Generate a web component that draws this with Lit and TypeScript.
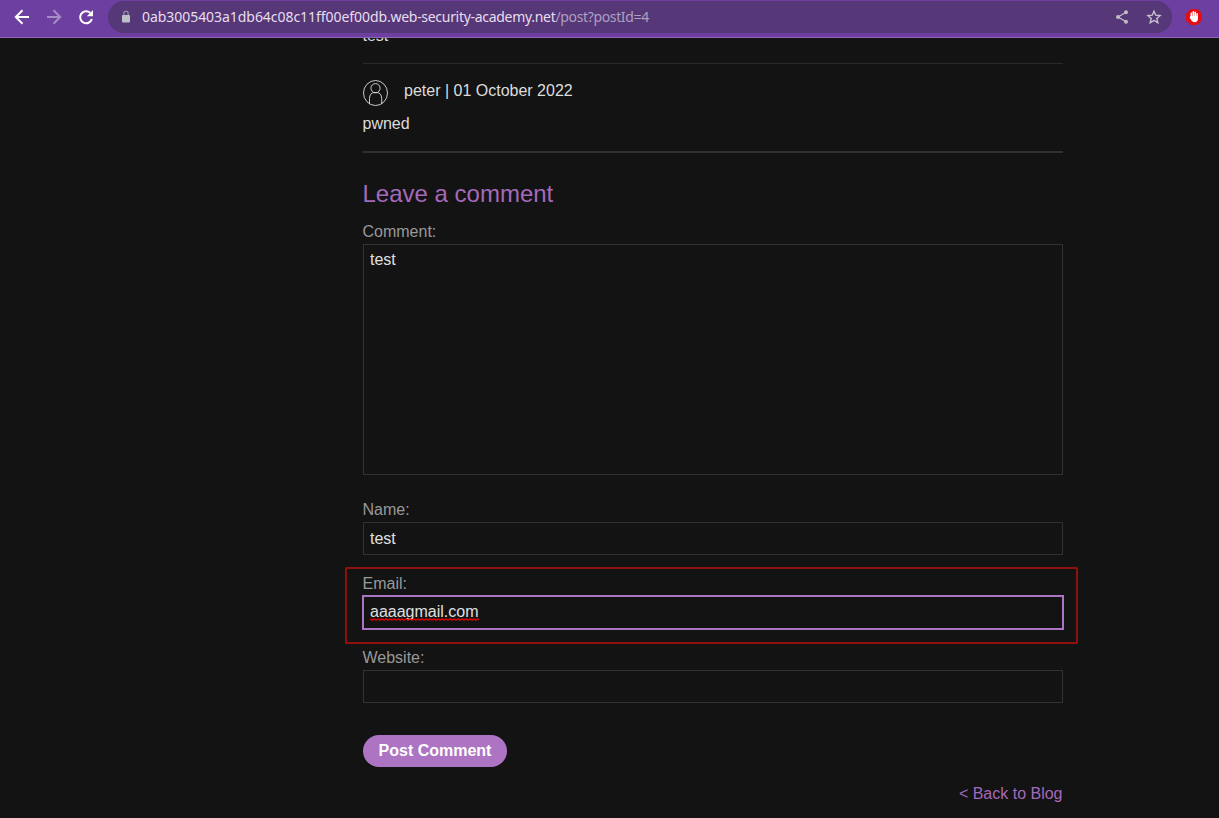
import { LitElement, html, css, svg } from "lit";
import { customElement, property } from "lit/decorators.js";

@customElement("browser-bar")
class BrowserBar extends LitElement {
  static styles = css`
    :host { display: block; position: relative; z-index: 2; }
    .bar { box-sizing: border-box; height: 38px; display: flex; align-items: flex-start; background: #6d3fa0; border-bottom: 1px solid #9065ba; }
    .nav { display: flex; gap: 16px; padding: 9px 0 0 14px; width: 94px; flex: none; }
    svg { display: block; flex: none; }
    .address { box-sizing: border-box; display: flex; align-items: center; width: 1064px; height: 32px; margin-top: 1px; border-radius: 16px; background: #563778; padding: 0 10px 0 10px; flex: none; }
    .url { flex: 1; margin-left: 8px; font: 14px/20px "Noto Sans", sans-serif; color: #e6deee; white-space: nowrap; }
    .url span { display: inline-block; }
    .sub { letter-spacing: -0.05px; }
    .domain { letter-spacing: -0.3px; }
    .path { color: #af9fc0; letter-spacing: -0.35px; }
    .tools { display: flex; gap: 16px; }
    .ext { margin: 8px 0 0 13px; }
  `;
  render() {
    return html`<div class="bar">
      <div class="nav">
        <svg width="16" height="16" viewBox="0 0 16 16" fill="none" stroke="#fff" stroke-width="2"><path d="M15 8H2M8.5 1.3L1.8 8l6.7 6.7" /></svg>
        <svg width="16" height="16" viewBox="0 0 16 16" fill="none" stroke="#a78bc6" stroke-width="2"><path d="M1 8h13M7.5 1.3L14.2 8l-6.7 6.7" /></svg>
        <svg width="16" height="16" viewBox="0 0 16 16"><path d="M13.9 10A6 6 0 1 1 12.2 3.8" fill="none" stroke="#fff" stroke-width="2" /><path d="M15 1v6.2H8.8z" fill="#fff" /></svg>
      </div>
      <div class="address">
        <svg width="16" height="16" viewBox="0 0 16 16"><rect x="4" y="6" width="8" height="7.5" rx="1" fill="#bdc1c6" /><path d="M5.8 6V4.4a2.2 2.2 0 0 1 4.4 0V6" fill="none" stroke="#a49bb0" stroke-width="1.1" /></svg>
        <div class="url"><span class="sub">0ab3005403a1db64c08c11ff00ef00db</span><span class="domain">.web-security-academy.net</span><span class="path">/post?postId=4</span></div>
        <div class="tools">
          <svg width="16" height="16" viewBox="0 0 16 16" fill="#c2bcc8"><path d="M12.1 3.3L4 8l8.1 4.7" fill="none" stroke="#c2bcc8" stroke-width="1.3" /><circle cx="12" cy="3.3" r="2" /><circle cx="4" cy="8" r="2" /><circle cx="12" cy="12.7" r="2" /></svg>
          <svg width="16" height="16" viewBox="0 0 16 16" fill="none" stroke="#c8c2cc" stroke-width="1.4"><path d="M8 2.2l1.75 4 4.35.4-3.3 2.85 1 4.25L8 11.45 4.2 13.7l1-4.25L1.9 6.6l4.35-.4z" /></svg>
        </div>
      </div>
      <svg class="ext" width="18" height="18" viewBox="0 0 18 18"><path d="M5.7 1h6.6L17 5.7v6.6L12.3 17H5.7L1 12.3V5.7z" fill="#e40d12" /><path d="M6.3 10V5.2M8.3 9V3.9M10.2 9V4.3M12.1 10V5.7" fill="none" stroke="#fff" stroke-width="1.6" stroke-linecap="round" /><path d="M5.5 8h7.4v2.7c0 2-1.2 3.5-3.2 3.5-1.7 0-2.8-.7-3.5-2.1L4.7 9.6z" fill="#fff" /></svg>
    </div>`;
  }
}

@customElement("form-field")
class FormField extends LitElement {
  @property() label = "";
  @property() value = "";
  @property({ type: Boolean, reflect: true }) multiline = false;
  @property({ type: Boolean, reflect: true }) focused = false;
  @property({ type: Boolean, reflect: true }) marked = false;
  static styles = css`
    :host { display: block; position: relative; height: 74px; }
    :host([multiline]) { height: 278px; }
    .label { box-sizing: border-box; height: 22px; padding-top: 1px; line-height: 18px; color: #999; margin-left: -0.5px; }
    .box { box-sizing: border-box; height: 33px; padding: 7px 6px 0; border: 1px solid #323232; color: #e0e0e0; line-height: 18px; }
    :host([multiline]) .box { height: 231px; padding-top: 6px; }
    :host([focused]) .box { outline: 2px solid #ad74c3; outline-offset: -1px; border-color: #131313; padding-top: 6px; }
    .text { position: relative; display: inline-block; }
    .wave { position: absolute; left: 0; top: 15px; width: 109px; height: 3px; }
    .mark { position: absolute; box-sizing: border-box; inset: -7px -15px -3px -18px; height: 77px; border: 2px solid #8f100c; border-radius: 1.5px; }
  `;
  render() {
    const wave = svg`<path d=${"M0 0.8" + " l2 1.4 l2 -1.4".repeat(28)} fill="none" stroke="#f00000" stroke-width="1.2" />`;
    return html`${this.marked ? html`<div class="mark"></div>` : ""}
      <div class="label">${this.label}</div>
      <div class="box"><span class="text">${this.value}${this.marked ? html`<svg class="wave" viewBox="0 0 109 3">${wave}</svg>` : ""}</span></div>`;
  }
}

@customElement("app-root")
class AppRoot extends LitElement {
  static styles = css`
    :host { display: block; height: 818px; overflow: hidden; background: #131313; font: 16px/18px "Liberation Sans", Arial, sans-serif; color: #ddd; }
    .page { box-sizing: border-box; width: 700px; margin-left: 363px; display: flex; flex-direction: column; }
    .previous { height: 36px; margin: -11px 0 0 -0.5px; }
    .comment { border-top: 1px solid #292929; border-bottom: 2px solid #303030; box-sizing: border-box; height: 90px; padding-top: 16px; }
    .author { display: flex; gap: 16px; height: 34px; }
    .author span { padding-top: 2px; }
    .avatar { display: block; }
    .body { margin: 1px 0 0 -0.5px; }
    h2 { margin: 27px 0 0 -0.5px; height: 42px; font-size: 24px; line-height: 28px; font-weight: 400; color: #a569bb; }
    .button { box-sizing: border-box; width: 144px; height: 32px; margin-top: 13px; border: 0; border-radius: 16px; background: #ad74c3; color: #fff; font: bold 16px/32px "Liberation Sans", Arial, sans-serif; padding: 0; text-align: center; }
    .back { align-self: flex-end; margin: 18px 0.5px 0 0; color: #a569bb; text-decoration: none; }
  `;
  render() {
    return html`<browser-bar></browser-bar>
      <main class="page">
        <div class="previous">test</div>
        <section class="comment">
          <div class="author">
            <svg class="avatar" width="25" height="26" viewBox="0 0 25 26" fill="none" stroke="#ddd" stroke-width="0.9"><ellipse cx="12.5" cy="13" rx="12" ry="12.5" /><circle cx="12.5" cy="8.2" r="4.6" /><path d="M6.5 24.2v-5.7c0-3.6 2-5.9 4.2-5.9h3.6c2.3 0 4.4 2.3 4.4 5.9v5.7" /></svg>
            <span>peter | 01 October 2022</span>
          </div>
          <div class="body">pwned</div>
        </section>
        <h2>Leave a comment</h2>
        <form-field label="Comment:" value="test" multiline></form-field>
        <form-field label="Name:" value="test"></form-field>
        <form-field label="Email:" value="aaaagmail.com" focused marked></form-field>
        <form-field label="Website:"></form-field>
        <button class="button">Post Comment</button>
        <a class="back">&lt; Back to Blog</a>
      </main>`;
  }
}
